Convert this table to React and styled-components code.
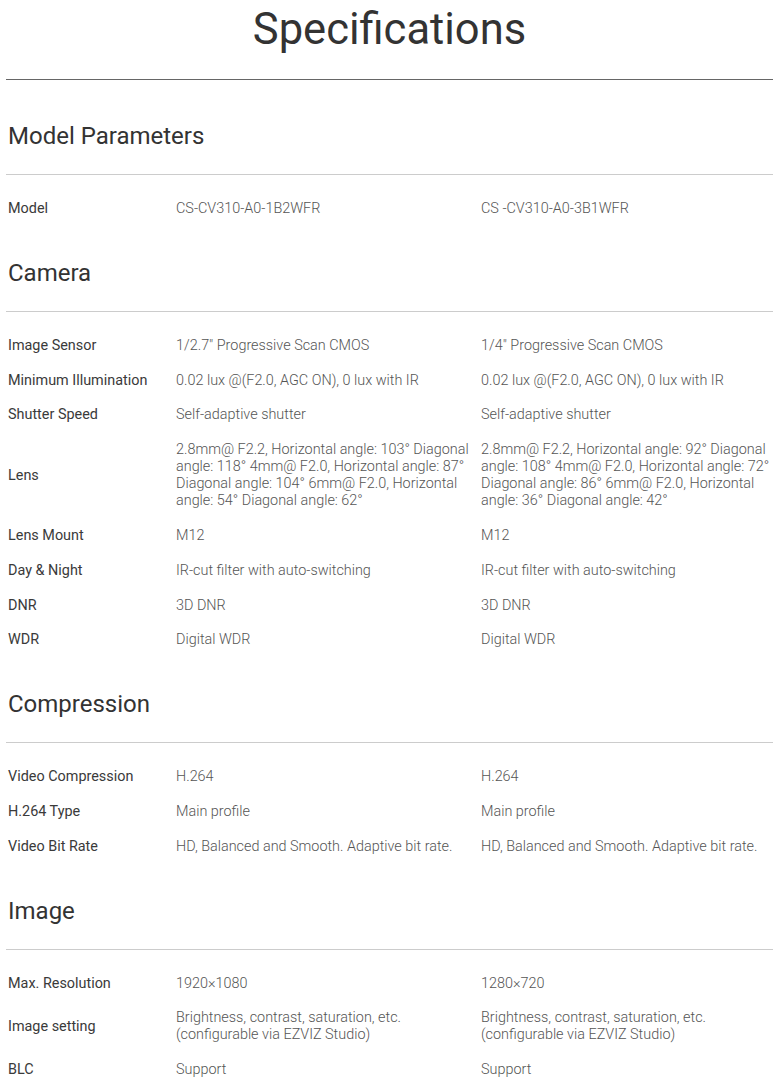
import styled, { createGlobalStyle } from 'styled-components';

const GlobalStyle = createGlobalStyle`
  body {
    margin: 0;
    background: #fff;
    font-family: Roboto, 'Liberation Sans', sans-serif;
  }
`;

const Page = styled.div`
  padding: 0 6px;
`;

const Title = styled.h1`
  margin: 0;
  padding-top: 4px;
  height: 75px;
  font-size: 43.5px;
  line-height: 52px;
  font-weight: 400;
  color: #333;
  text-align: center;
  border-bottom: 1px solid #666;
`;

const Section = styled.section`
  &:first-of-type h2 {
    padding-top: 42px;
  }
`;

const SectionTitle = styled.h2`
  margin: 0;
  padding: 33px 0 24px 2px;
  font-size: 24px;
  line-height: 28px;
  font-weight: 400;
  color: #333;
  border-bottom: 1px solid #ccc;
`;

const Table = styled.div`
  margin-top: 16px;
  display: grid;
  grid-template-columns: 168px 305px 1fr;
`;

const Cell = styled.div`
  display: flex;
  align-items: center;
  padding: 9px 2px 8.8px;
  font-size: 14.4px;
  line-height: 17px;
  font-weight: ${p => (p.$label ? 400 : 300)};
  color: ${p => (p.$label ? '#3a3a3a' : '#555')};
`;

const sections = [
  {
    title: 'Model Parameters',
    rows: [['Model', 'CS-CV310-A0-1B2WFR', 'CS -CV310-A0-3B1WFR']],
  },
  {
    title: 'Camera',
    rows: [
      ['Image Sensor', '1/2.7" Progressive Scan CMOS', '1/4" Progressive Scan CMOS'],
      ['Minimum Illumination', '0.02 lux @(F2.0, AGC ON), 0 lux with IR', '0.02 lux @(F2.0, AGC ON), 0 lux with IR'],
      ['Shutter Speed', 'Self-adaptive shutter', 'Self-adaptive shutter'],
      [
        'Lens',
        '2.8mm@ F2.2, Horizontal angle: 103° Diagonal angle: 118° 4mm@ F2.0, Horizontal angle: 87° Diagonal angle: 104° 6mm@ F2.0, Horizontal angle: 54° Diagonal angle: 62°',
        '2.8mm@ F2.2, Horizontal angle: 92° Diagonal angle: 108° 4mm@ F2.0, Horizontal angle: 72° Diagonal angle: 86° 6mm@ F2.0, Horizontal angle: 36° Diagonal angle: 42°',
      ],
      ['Lens Mount', 'M12', 'M12'],
      ['Day & Night', 'IR-cut filter with auto-switching', 'IR-cut filter with auto-switching'],
      ['DNR', '3D DNR', '3D DNR'],
      ['WDR', 'Digital WDR', 'Digital WDR'],
    ],
  },
  {
    title: 'Compression',
    rows: [
      ['Video Compression', 'H.264', 'H.264'],
      ['H.264 Type', 'Main profile', 'Main profile'],
      ['Video Bit Rate', 'HD, Balanced and Smooth. Adaptive bit rate.', 'HD, Balanced and Smooth. Adaptive bit rate.'],
    ],
  },
  {
    title: 'Image',
    rows: [
      ['Max. Resolution', '1920×1080', '1280×720'],
      [
        'Image setting',
        'Brightness, contrast, saturation, etc. (configurable via EZVIZ Studio)',
        'Brightness, contrast, saturation, etc. (configurable via EZVIZ Studio)',
      ],
      ['BLC', 'Support', 'Support'],
    ],
  },
];

export default function App() {
  return (
    <Page>
      <GlobalStyle />
      <Title>Specifications</Title>
      {sections.map(section => (
        <Section key={section.title}>
          <SectionTitle>{section.title}</SectionTitle>
          <Table>
            {section.rows.map(([label, a, b]) => [
              <Cell $label key={label + '-l'}>{label}</Cell>,
              <Cell key={label + '-a'}>{a}</Cell>,
              <Cell key={label + '-b'}>{b}</Cell>,
            ])}
          </Table>
        </Section>
      ))}
    </Page>
  );
}
